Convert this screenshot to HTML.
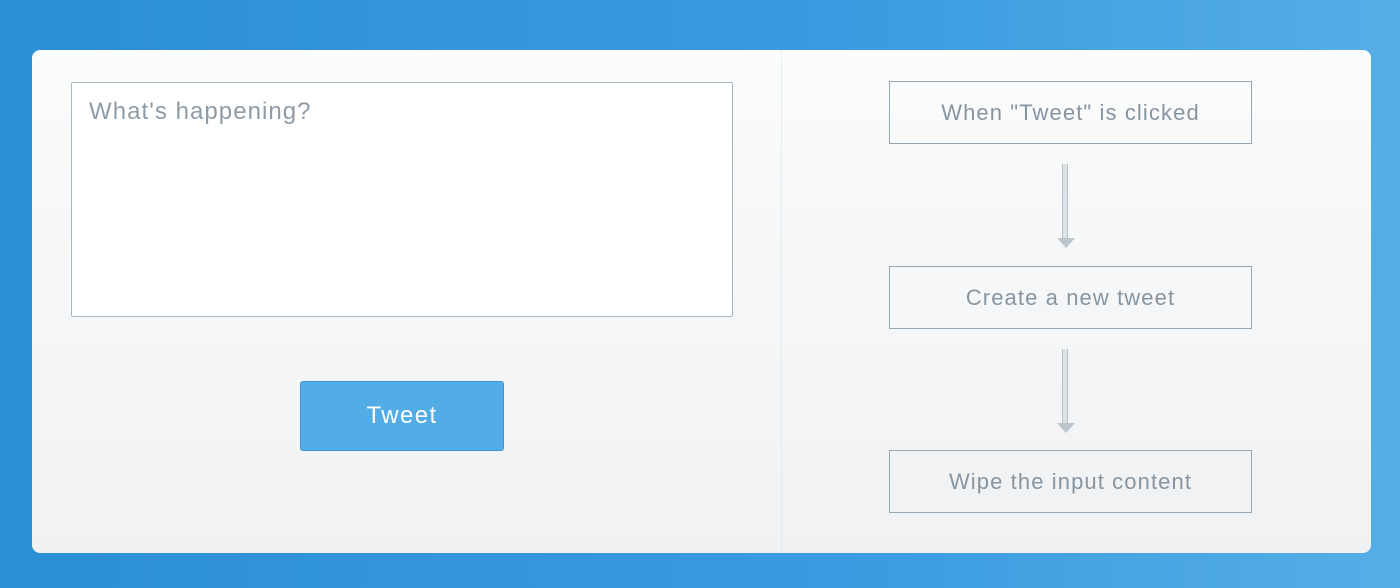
<!DOCTYPE html>
<html><head><meta charset="utf-8"><style>
html,body{margin:0;padding:0}
body{width:1400px;height:588px;overflow:hidden;background:linear-gradient(90deg,#2b8fd4 0%,#3a9be0 60%,#56aee6 100%);font-family:"Liberation Sans",sans-serif;position:relative}
.card{position:absolute;left:32px;top:50px;width:1339px;height:503px;border-radius:8px;background:linear-gradient(180deg,#fbfcfc 0%,#eff1f3 100%)}
.div{position:absolute;left:781px;top:50px;width:0;height:503px;border-left:1px dotted #dde2e6}
.ta{position:absolute;left:71px;top:82px;width:662px;height:235px;background:#fff;border:1px solid #a9b7c1;border-radius:2px;box-sizing:border-box}
.ta span{position:absolute;left:17px;top:15px;font-size:24px;color:#8e9ca8;letter-spacing:1.05px}
.btn{position:absolute;left:300px;top:381px;width:204px;height:70px;background:#52ace5;border:1px solid #3d95d2;border-radius:3px;box-sizing:border-box;color:#fff;font-size:24px;text-align:center;line-height:68px;letter-spacing:1.4px}
.box{position:absolute;left:889px;width:363px;height:63px;border:1px solid #97a7b2;box-sizing:border-box;text-align:center;line-height:61px;font-size:22px;color:#8795a1;letter-spacing:1.1px}
.arr{position:absolute;left:1057px;width:18px}
.arr .s{position:absolute;left:5px;top:0;width:6px;height:76px;border-left:1px solid #b4c0c8;border-right:1px solid #b4c0c8;background:#dde3e7;box-sizing:border-box}
.arr .h{position:absolute;left:0;top:74px;width:0;height:0;border-left:9px solid transparent;border-right:9px solid transparent;border-top:10px solid #bcc6cd}
</style></head><body>
<div class="card"></div>
<div class="div"></div>
<div class="ta"><span>What's happening?</span></div>
<div class="btn">Tweet</div>
<div class="box" style="top:81px">When "Tweet" is clicked</div>
<div class="arr" style="top:164px"><div class="s"></div><div class="h"></div></div>
<div class="box" style="top:266px">Create a new tweet</div>
<div class="arr" style="top:349px"><div class="s"></div><div class="h"></div></div>
<div class="box" style="top:450px">Wipe the input content</div>
</body></html>
